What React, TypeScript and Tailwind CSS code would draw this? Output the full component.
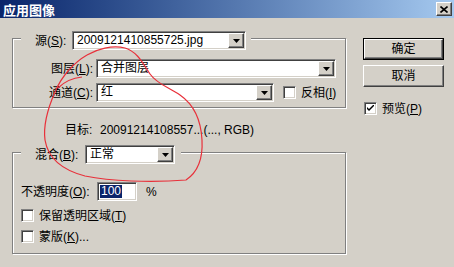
import React from "react";

const sunken =
  "border border-t-[#808080] border-l-[#808080] border-b-[#ffffff] border-r-[#ffffff] shadow-[inset_1px_1px_0_#404040,inset_-1px_-1px_0_#d4d0c8]";
const raised =
  "border border-t-[#ffffff] border-l-[#ffffff] border-b-[#404040] border-r-[#404040] shadow-[inset_-1px_-1px_0_#808080]";
const etched = "border border-[#808080] shadow-[inset_1px_1px_0_#ffffff,1px_1px_0_#ffffff]";

function U({ c }: { c: string }) {
  return <span className="underline underline-offset-[1px]">{c}</span>;
}

function Combo({ w, text }: { w: string; text: string }) {
  return (
    <div className={`${sunken} ${w} h-[19px] bg-white p-[1px] flex items-center`}>
      <span className="flex-1 pl-[3px] leading-[15px] whitespace-nowrap overflow-hidden">{text}</span>
      <div className={`${raised} w-[16px] h-[15px] bg-[#d4d0c8] flex items-center justify-center shrink-0`}>
        <svg width="7" height="4" viewBox="0 0 7 4">
          <path d="M0 0H7L3.5 4Z" fill="#000" />
        </svg>
      </div>
    </div>
  );
}

function Check({ checked = false }: { checked?: boolean }) {
  return (
    <div className={`${sunken} w-[13px] h-[13px] bg-white flex items-center justify-center shrink-0`}>
      {checked && (
        <svg width="7" height="7" viewBox="0 0 7 7">
          <path d="M0 2L0 4L2 6L7 1L7 -1L2 4Z" fill="#000" />
        </svg>
      )}
    </div>
  );
}

export default function App() {
  return (
    <div
      className="relative w-[454px] h-[267px] bg-[#d4d0c8] overflow-hidden text-[12px] text-black leading-none"
      style={{ fontFamily: '"Liberation Sans", "Noto Sans CJK SC", sans-serif' }}
    >
      {/* Title bar */}
      <div className="h-[18px] flex items-center justify-between bg-gradient-to-r from-[#0a246a] to-[#a6caf0]">
        <span className="pl-[3px] text-white font-bold text-[13px]" style={{ fontFamily: '"Noto Sans CJK SC", sans-serif' }}>
          应用图像
        </span>
        <div className={`${raised} mr-[2px] w-[16px] h-[14px] bg-[#d4d0c8] flex items-center justify-center`}>
          <svg width="8" height="7" viewBox="0 0 8 7">
            <path d="M0.5 0.5L7.5 6.5M7.5 0.5L0.5 6.5" stroke="#000" strokeWidth="1.6" />
          </svg>
        </div>
      </div>

      <div className="flex">
        {/* Left column */}
        <div className="w-[363px] pl-[12px] pt-[20px] flex flex-col">
          {/* Group 1 */}
          <div className={`${etched} w-[334px] h-[70px] flex flex-col`}>
            <div className="-mt-[8px] ml-[8px] flex items-center w-fit h-[19px] bg-[#d4d0c8] pl-[14px] pr-[5px]">
              <span className="w-[37px] whitespace-nowrap">
                源(<U c="S" />):
              </span>
              <Combo w="w-[174px]" text="2009121410855725.jpg" />
            </div>
            <div className="mt-[9px] flex items-center h-[19px]">
              <span className="w-[80px] text-right whitespace-nowrap">
                图层(<U c="L" />):
              </span>
              <div className="ml-[3px]">
                <Combo w="w-[240px]" text="合并图层" />
              </div>
            </div>
            <div className="mt-[5px] flex items-center h-[19px]">
              <span className="w-[80px] text-right whitespace-nowrap">
                通道(<U c="C" />):
              </span>
              <div className="ml-[3px]">
                <Combo w="w-[178px]" text="红" />
              </div>
              <div className="ml-[9px] flex items-center gap-[5px]">
                <Check />
                <span className="whitespace-nowrap">
                  反相(<U c="I" />)
                </span>
              </div>
            </div>
          </div>

          {/* Target */}
          <div className="mt-[15px] h-[14px] flex items-center pl-[53px] whitespace-nowrap">
            <span className="w-[35px]">目标:</span>
            <span>20091214108557...(..., RGB)</span>
          </div>

          {/* Group 2 */}
          <div className={`${etched} mt-[15px] w-[334px] h-[102px] flex flex-col`}>
            <div className="-mt-[8px] ml-[8px] flex items-center w-fit h-[19px] bg-[#d4d0c8] pl-[14px] pr-[6px]">
              <span className="w-[50px] whitespace-nowrap">
                混合(<U c="B" />):
              </span>
              <Combo w="w-[90px]" text="正常" />
            </div>
            <div className="mt-[18px] pl-[8px] flex items-center h-[19px]">
              <span className="w-[76px] whitespace-nowrap">
                不透明度(<U c="O" />):
              </span>
              <div className={`${sunken} w-[40px] h-[19px] bg-white flex items-center pl-[2px]`}>
                <span className="bg-[#0a246a] text-white leading-[13px] px-[1px]">100</span>
              </div>
              <span className="ml-[9px]">%</span>
            </div>
            <div className="mt-[8px] pl-[8px] flex items-center gap-[5px] h-[13px]">
              <Check />
              <span className="whitespace-nowrap">
                保留透明区域(<U c="T" />)
              </span>
            </div>
            <div className="mt-[8px] pl-[8px] flex items-center gap-[5px] h-[13px]">
              <Check />
              <span className="whitespace-nowrap">
                蒙版(<U c="K" />)...
              </span>
            </div>
          </div>
        </div>

        {/* Right column */}
        <div className="pt-[20px] flex flex-col">
          <div className="w-[81px] h-[22px] border border-black">
            <div className={`${raised} w-full h-full bg-[#d4d0c8] flex items-center justify-center`}>确定</div>
          </div>
          <div className={`${raised} mt-[5px] w-[81px] h-[22px] bg-[#d4d0c8] flex items-center justify-center`}>
            取消
          </div>
          <div className="mt-[15px] ml-[1px] flex items-center gap-[5px] h-[13px]">
            <Check checked />
            <span className="whitespace-nowrap">
              预览(<U c="P" />)
            </span>
          </div>
        </div>
      </div>

      {/* Hand-drawn red annotation */}
      <svg className="absolute left-0 top-0 pointer-events-none" width="454" height="267" viewBox="0 0 454 267">
        <path
          d="M87 55 C75 62 62 75 55 92 C48 108 43 125 45 140 C48 158 62 170 85 176 C110 181 150 183 186 180 C198 172 203 158 202 140 C201 120 193 104 180 95 C168 87 157 84 150 74 C143 64 138 52 125 48 C112 45 97 49 87 55"
          fill="none"
          stroke="#e8303a"
          strokeWidth="1.2"
        />
        <path d="M58 88 C64 82 72 78 82 77" fill="none" stroke="#e8303a" strokeWidth="1.2" />
      </svg>
    </div>
  );
}
